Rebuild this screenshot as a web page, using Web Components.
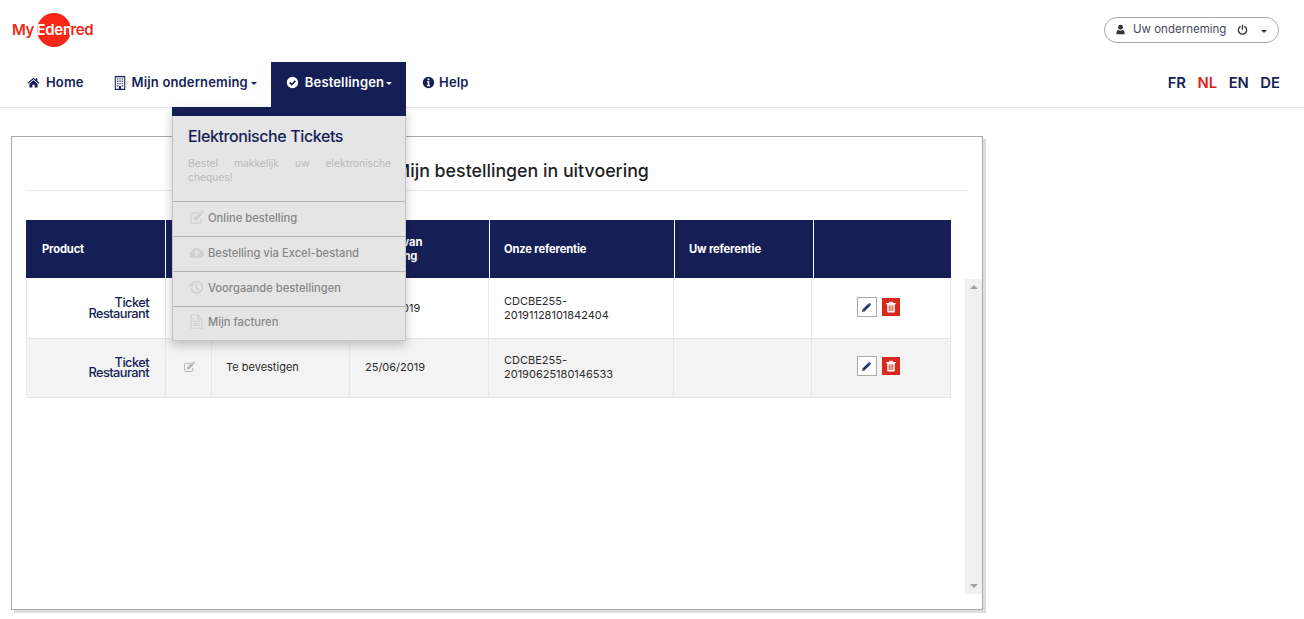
<!DOCTYPE html>
<html lang="nl"><head><meta charset="utf-8"><title>MyEdenred</title>
<style>
html,body{margin:0;padding:0;background:#fff}
body{font-family:Inter,"Open Sans","Liberation Sans",sans-serif;color:#161f55;height:619px;overflow:hidden}
</style></head><body>
<my-app></my-app>
<script>
const ICONS={
home:'<path fill="currentColor" d="M8 2.200.6 8.400l.9 1L8 4l6.500 5.400.9-1-2.600-2.200V2.800h-2v1.700zM3 9.400V14h3.600v-3.200h2.800V14H13V9.400L8 5.200z"/>',
building:'<path fill="none" stroke="currentColor" stroke-width="1.200" d="M2.600.7h10.800v14.600H2.600z"/><path fill="currentColor" opacity=".75" d="M4.500 2.500h1.700v1.600H4.500zm2.700 0h1.700v1.600H7.200zm2.700 0h1.700v1.600H9.900zM4.500 5.200h1.700v1.600H4.500zm2.700 0h1.700v1.600H7.200zm2.700 0h1.700v1.600H9.900zM4.500 7.900h1.700v1.600H4.500zm2.700 0h1.700v1.600H7.200zm2.700 0h1.700v1.600H9.900zM4.500 10.600h1.700v1.600H4.500zm5.400 0h1.700v1.600H9.900z"/><path fill="currentColor" d="M6.800 11.500h2.400V16H6.800z"/>',
check:'<circle cx="8" cy="8" r="7" fill="currentColor"/><path fill="none" stroke="var(--ic2,#fff)" stroke-width="2" d="m4.400 8 2.600 2.600 4.600-4.800"/>',
info:'<circle cx="8" cy="8" r="7" fill="currentColor"/><path fill="#fff" d="M6.900 3.200h2.200v2H6.900zM6 6.400h3.100v4.900H10v1.400H6v-1.400h1V7.800H6z"/>',
user:'<circle cx="8" cy="4.600" r="3.600" fill="currentColor"/><path fill="currentColor" d="M2 14.800c0-4 1.200-6 3.300-6 .8.600 1.700 1 2.700 1s1.900-.4 2.700-1c2.100 0 3.300 2 3.300 6z"/>',
power:'<path fill="none" stroke="currentColor" stroke-width="1.900" stroke-linecap="round" d="M4.600 3.800a6 6 0 1 0 6.800 0M8 1.500v6"/>',
edit:'<path fill="none" stroke="currentColor" stroke-width="1.300" d="M13 9v3.300a1.700 1.700 0 0 1-1.700 1.700H3.700A1.700 1.700 0 0 1 2 12.300V4.700A1.700 1.700 0 0 1 3.700 3H10"/><path fill="currentColor" d="M5.500 8.500 12 2l2.500 2.500L8 11H5.500zM12.700 1.300l.6-.5c.3-.2.6-.2.9 0l1.500 1.500c.2.300.2.600 0 .9l-.5.600z"/>',
cloud:'<path fill="currentColor" fill-rule="evenodd" d="M4 13.500a3.500 3.500 0 0 1-.8-6.900A4.800 4.800 0 0 1 12 5.200a4.200 4.200 0 0 1 0 8.300zM8 5 4.800 8.500H7v3h2v-3h2.200z"/>',
history:'<path fill="none" stroke="currentColor" stroke-width="1.700" d="M2.800 4.500A6.200 6.200 0 1 1 2 9"/><path fill="currentColor" d="M.8 1.900 5.600 6.600H.8z"/><path fill="none" stroke="currentColor" stroke-width="1.500" d="M8 4.800v3.900l2.500 1.500"/>',
file:'<path fill="none" stroke="currentColor" stroke-width="1.300" d="M2.200.8h7.300l4.300 4.300v10.100H2.200zM9.300 1v4.300h4.300"/><path fill="none" stroke="currentColor" stroke-width="1.200" d="M4.600 7.700h6.800M4.600 9.900h6.800M4.600 12.100h6.800"/>',
pencil:'<path fill="#1d3a66" d="M1.500 14.500 2.500 10.700 10.700 2.500l2.800 2.800-8.200 8.200z"/><path fill="#9a6a26" d="M1.500 14.500 2.500 10.700l2.800 2.800z"/><path fill="#2f6aa8" d="M11.500 1.700c.5-.5 1.200-.5 1.700 0l1.100 1.100c.5.500.5 1.200 0 1.700l-.8.800-2.800-2.800z"/>',
trash:'<path fill="currentColor" fill-rule="evenodd" d="M5.800 1h4.400l.8 1.800h3.300V4.200H13v10a1 1 0 0 1-1 1H4a1 1 0 0 1-1-1v-10H1.700V2.800H5zM6.600 2.800h2.800l-.3-.6H6.900zM5 5.600v7.800h1.200V5.600zm2.400 0v7.800h1.200V5.600zm2.400 0v7.800H11V5.600z"/>'
};
function define(name,html){
  customElements.define(name,class extends HTMLElement{
    connectedCallback(){
      if(this.shadowRoot)return;
      const r=this.attachShadow({mode:'open'});
      r.innerHTML=typeof html==='function'?html(this):html;
    }
  });
}
define('my-icon',h=>{
  const s=h.getAttribute('size')||14;
  return `<style>:host{display:inline-flex;flex:none;width:${s}px;height:${s}px;line-height:0}svg{width:100%;height:100%;display:block}</style><svg viewBox="0 0 16 16" aria-hidden="true">${ICONS[h.getAttribute('name')]||''}</svg>`;
});
define('my-logo',`<style>
:host{display:block;position:relative;width:84px;height:34px;font:600 15px/33px Inter,sans-serif;letter-spacing:-.4px;color:#f72717}
.c{position:absolute;left:24.500px;top:0;width:34px;height:34px;border-radius:50%;background:#f72717}
.t{position:relative;display:flex;white-space:nowrap}
.m{width:24.500px}.w{color:#fff;width:34px;letter-spacing:-.3px}
</style><div class="c"></div><div class="t"><span class="m">My</span><span class="w">Eden</span><span>red</span></div>`);
define('my-user',`<style>
:host{display:flex;align-items:center;box-sizing:border-box;width:175px;height:26px;border:1px solid #a9a9a9;border-radius:14px;padding-left:10px;font:400 11.500px/1 Inter,sans-serif;color:#474b60}
span{margin-left:7px;width:100px;white-space:nowrap}
.p{color:#333;margin:0 0 2px 4px}
i{margin-left:13px;border:3.500px solid transparent;border-top-color:#333;border-bottom:0;margin-top:2px}
my-icon{color:#333;margin-bottom:2px}
</style><my-icon name="user" size="11"></my-icon><span>Uw onderneming</span><my-icon class="p" name="power" size="11"></my-icon><i></i>`);
define('my-header',`<style>
:host{display:flex;align-items:flex-start;justify-content:space-between;box-sizing:border-box;height:62px;padding:13px 25px 0 12px}
my-user{margin-top:4px}
</style><my-logo></my-logo><my-user></my-user>`);
define('nav-item',h=>{
  const active=h.hasAttribute('active'),caret=h.hasAttribute('caret');
  return `<style>
:host{display:flex;align-items:center;height:45px;box-sizing:border-box;padding:0 ${h.getAttribute('pr')||15}px 4px ${h.getAttribute('pl')||15}px;font:600 13px/1 Inter,sans-serif;letter-spacing:.15px;color:${active?'#fff':'#161f55'};background:${active?'#161f55':'transparent'};white-space:nowrap;--ic2:#161f55}
span{margin-left:${h.getAttribute('gap')||7}px}
i{border:3px solid transparent;border-top-color:currentColor;border-bottom:0;margin-left:${caret?h.getAttribute('cm')||2:0}px;margin-top:2px}
</style><my-icon name="${h.getAttribute('icon')}" size="${h.getAttribute('is')||13}"></my-icon><span><slot></slot></span>${caret?'<i></i>':''}`;
});
define('my-nav',`<style>
:host{display:flex;align-items:stretch;height:46px;box-sizing:border-box;border-bottom:1px solid #e3e3e3;padding:0 24px 0 12px;justify-content:space-between}
.l{display:flex}
.r{display:flex;gap:11.500px;align-items:center;font:600 14.800px/1 Inter,sans-serif;color:#161f55;padding-bottom:2px}
.r b{font-weight:600}.r .on{color:#d9251c}
</style><div class="l"><nav-item icon="home" is="13" pl="15" pr="15" gap="6">Home</nav-item><nav-item icon="building" is="14" pl="14" pr="14" caret cm="3" gap="5">Mijn onderneming</nav-item><nav-item active icon="check" is="13" pl="15" pr="14" caret gap="6">Bestellingen</nav-item><nav-item icon="info" is="13" pl="16" pr="15" gap="4">Help</nav-item></div>
<div class="r"><b>FR</b><b class="on">NL</b><b>EN</b><b>DE</b></div>`);
define('menu-item',h=>`<style>
:host{display:flex;align-items:center;height:35px;box-sizing:border-box;border-top:1px solid #b4b4b4;padding:0 0 0 16px;font:500 11.200px/1 Inter,sans-serif;color:#878787;white-space:nowrap}
my-icon{color:#d0d0d0;margin:0 4px 3px 0}
</style><my-icon name="${h.getAttribute('icon')}" size="15"></my-icon><slot></slot>`);
define('my-menu',`<style>
:host{display:block;position:absolute;left:172px;top:107px;width:234px;height:234px;box-sizing:border-box;background:#e5e5e5;border:1px solid #c4c4c4;border-top:0;box-shadow:0 4px 10px rgba(0,0,0,.22);z-index:5}
.bar{height:9px;background:#161f55;margin:0 -1px}
h3{margin:0;padding:10px 14px 0 15px;font:500 16px/20px Inter,sans-serif;color:#161f55;letter-spacing:-.4px;white-space:nowrap}
p{margin:0;padding:10px 14px 0 15px;height:45px;font:400 10.300px/14px Inter,sans-serif;color:#bababa;text-align:justify}
menu-item:last-child{height:34px;padding-bottom:1px}
</style><div class="bar"></div><h3>Elektronische Tickets</h3><p>Bestel makkelijk uw elektronische cheques!</p>
<menu-item icon="edit">Online bestelling</menu-item><menu-item icon="cloud">Bestelling via Excel-bestand</menu-item><menu-item icon="history">Voorgaande bestellingen</menu-item><menu-item icon="file">Mijn facturen</menu-item>`);
define('tr-logo',`<style>
:host{display:block;font:500 12.800px/10.500px Inter,sans-serif;letter-spacing:-.55px;color:#161f55;text-align:right;margin-top:2px}
</style>Ticket<br>Restaurant`);
define('act-buttons',h=>`<style>
:host{display:flex;align-items:center;justify-content:center;gap:5px;padding:0 6px ${h.getAttribute('pb')||3}px 0}
.e{box-sizing:border-box;width:20px;height:20px;border:1px solid #aaa;background:#fff;display:flex;align-items:center;justify-content:center}
.d{width:18px;height:18px;background:#d9281c;display:flex;align-items:center;justify-content:center;color:#fff}
</style><div class="e"><my-icon name="pencil" size="11"></my-icon></div><div class="d"><my-icon name="trash" size="12"></my-icon></div>`);
const HCOLS='139px 46px 139px 139px 185px 139px 138px';
const BCOLS='139px 46px 138px 139px 185px 138px 139px';
define('head-row',`<style>
:host{display:grid;grid-template-columns:${HCOLS};height:58px;background:#161f55;color:#fff;font:700 11.200px/14px Inter,sans-serif;letter-spacing:-.15px}
div{display:flex;align-items:center;padding:0 0 0 14px;border-left:1px solid #fff;box-sizing:border-box}
div:first-of-type{border-left:0;padding-left:16px}
</style><div>Product</div><div></div><div></div><div>Datum van<br>bestelling</div><div>Onze referentie</div><div>Uw referentie</div><div></div>`);
define('body-row',h=>`<style>
:host{display:grid;grid-template-columns:${BCOLS};height:${h.getAttribute('rh')}px;box-sizing:border-box;border-bottom:1px solid #e6e6e6;border-left:1px solid #e6e6e6;background:${h.hasAttribute('alt')?'#f3f3f3':'#fff'};font:400 11px/14px Inter,sans-serif;color:#2b2b2b}
div{display:flex;align-items:center;box-sizing:border-box;border-right:1px solid #e6e6e6;padding:0 15px 2px}
div:first-of-type{justify-content:flex-end;padding:0 16px 2px 0}
.s{padding-left:14px}
.i{justify-content:center;padding:0 0 2px;color:#b4b4b4}
div:last-child{padding:0;justify-content:center}
</style><div><tr-logo></tr-logo></div><div class="i"><my-icon name="edit" size="12"></my-icon></div><div class="s">Te bevestigen</div><div>${h.getAttribute('date')}</div><div><span>CDCBE255-<br>${h.getAttribute('ref')}</span></div><div></div><div><act-buttons pb="${h.getAttribute('pb')||3}"></act-buttons></div>`);
define('my-scrollbar',`<style>
:host{display:flex;flex:none;flex-direction:column;justify-content:space-between;align-items:center;width:17px;height:315px;background:#f0f0f0;padding:6px 0;box-sizing:border-box}
i{border:4px solid transparent}
.u{border-bottom-color:#a3a3a3;border-top:0}.d{border-top-color:#a3a3a3;border-bottom:0}
</style><i class="u"></i><i class="d"></i>`);
define('my-panel',`<style>
:host{display:block;box-sizing:border-box;width:972px;height:474px;margin:28px 0 0 11px;border:1px solid #a9a9a9;box-shadow:3px 3px 0 #ddd;padding:0 14px;background:#fff}
h2{margin:0;height:54px;box-sizing:border-box;padding:21px 0 0 368px;font:500 17.800px/26px Inter,sans-serif;color:#222;white-space:nowrap;border-bottom:1px solid #e6e6e6;width:942px}
head-row{margin-top:29px;width:925px}
.b{display:flex;align-items:flex-start;gap:14px;margin-top:1px}
.t{flex:none;width:925px}
</style><h2>Mijn bestellingen in uitvoering</h2><head-row></head-row>
<div class="b"><div class="t"><body-row rh="60" date="28/11/2019" ref="20191128101842404"></body-row><body-row rh="59" pb="4" alt date="25/06/2019" ref="20190625180146533"></body-row></div><my-scrollbar></my-scrollbar></div>`);
define('my-app',`<style>:host{display:block;position:relative;height:619px}</style><my-header></my-header><my-nav></my-nav><my-panel></my-panel><my-menu></my-menu>`);
</script>
</body></html>
